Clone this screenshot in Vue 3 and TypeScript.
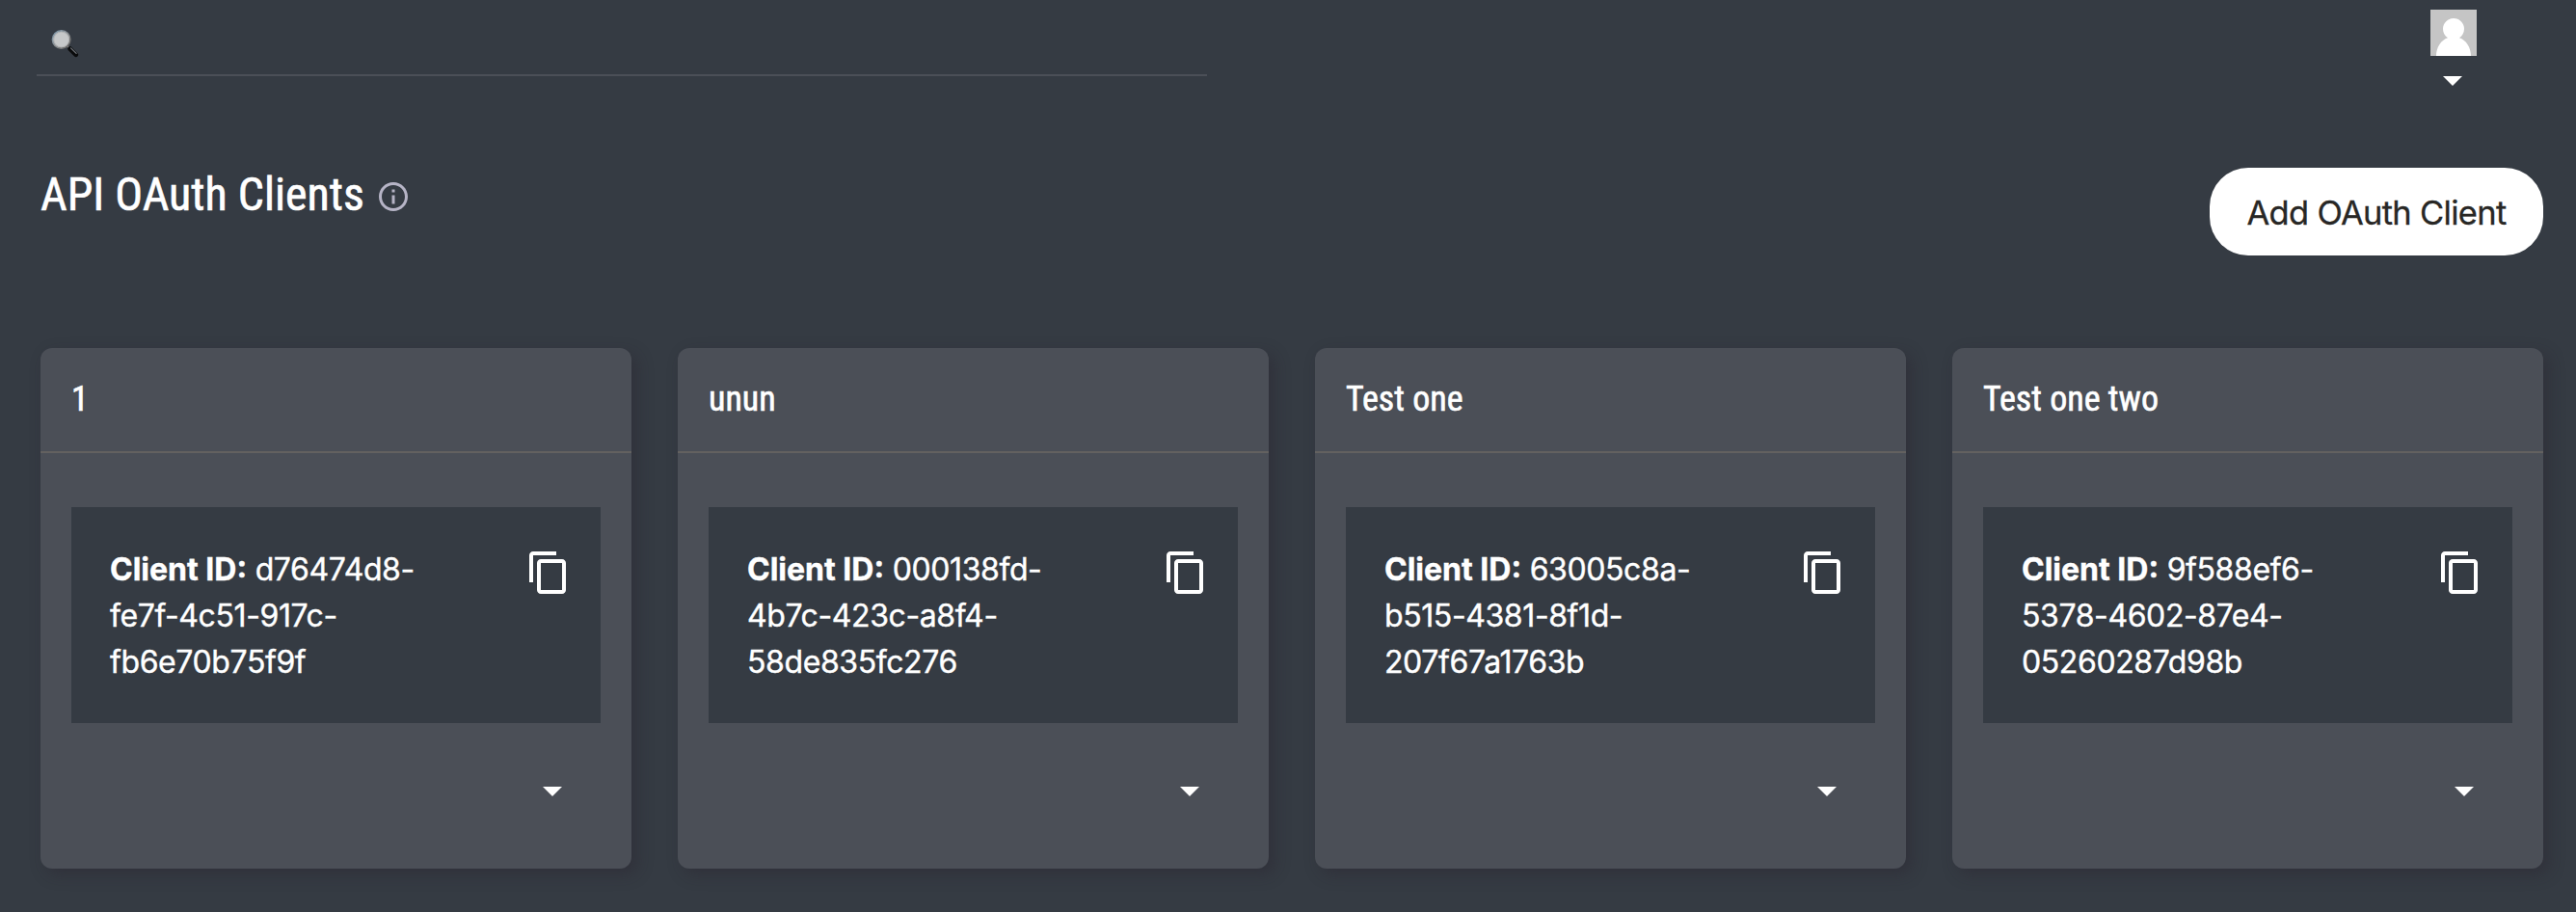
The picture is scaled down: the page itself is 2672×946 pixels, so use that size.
<script setup lang="ts">
interface Client {
  name: string
  idLines: string[]
}

const clients: Client[] = [
  { name: '1', idLines: ['d76474d8-', 'fe7f-4c51-917c-', 'fb6e70b75f9f'] },
  { name: 'unun', idLines: ['000138fd-', '4b7c-423c-a8f4-', '58de835fc276'] },
  { name: 'Test one', idLines: ['63005c8a-', 'b515-4381-8f1d-', '207f67a1763b'] },
  { name: 'Test one two', idLines: ['9f588ef6-', '5378-4602-87e4-', '05260287d98b'] },
]
</script>

<template>
  <div class="page">
    <header class="topbar">
      <div class="search">
        <svg class="search-icon" viewBox="0 0 30 30" aria-hidden="true">
          <defs>
            <linearGradient id="rim" x1="0" y1="0" x2="1" y2="1">
              <stop offset="0" stop-color="#7f9aae" />
              <stop offset="0.5" stop-color="#8b8f92" />
              <stop offset="1" stop-color="#5d5a57" />
            </linearGradient>
          </defs>
          <path d="M17 18l3 3" stroke="#8a8a8a" stroke-width="2.4" />
          <path d="M19.500 20.5l6.300 6.300" stroke="#0a0b0c" stroke-width="4.600" stroke-linecap="round" />
          <path d="M20.500 19.800l5.600 5.600" stroke="#73777d" stroke-width="1.200" stroke-linecap="round" />
          <circle cx="10.700" cy="11" r="9.2" fill="#c6c8c9" stroke="url(#rim)" stroke-width="1.7" />
          <circle cx="10.700" cy="11" r="7.9" fill="none" stroke="#a9abac" stroke-width="0.7" />
        </svg>
      </div>
      <div class="account">
        <svg class="avatar" viewBox="0 0 48 48" aria-hidden="true">
          <rect width="48" height="48" fill="#c5c5c5" />
          <path d="M6 48C6 39 11 31.5 18 29.2C14.800 27.200 13 23.600 13 20A11 11 0 0 1 35 20C35 23.600 33.200 27.200 30 29.200C37 31.500 42 39 42 48Z" fill="#fff" />
        </svg>
        <svg class="caret" viewBox="0 0 24 24" aria-hidden="true"><path d="M7 10l5 5 5-5z" /></svg>
      </div>
    </header>

    <div class="heading">
      <h1>API OAuth Clients</h1>
      <svg class="info" viewBox="0 0 24 24" aria-hidden="true">
        <path d="M11 7h2v2h-2zm0 4h2v6h-2zm1-9C6.480 2 2 6.480 2 12s4.480 10 10 10 10-4.480 10-10S17.520 2 12 2zm0 18c-4.410 0-8-3.590-8-8s3.590-8 8-8 8 3.590 8 8-3.590 8-8 8z" />
      </svg>
      <button class="add" type="button">Add OAuth Client</button>
    </div>

    <main class="cards">
      <section v-for="client in clients" :key="client.name" class="card">
        <h2>{{ client.name }}</h2>
        <div class="body">
          <div class="client-id">
            <p>
              <strong>Client ID:</strong> {{ client.idLines[0] }}<br />{{ client.idLines[1] }}<br />{{ client.idLines[2] }}
            </p>
            <svg class="copy" viewBox="0 0 24 24" aria-hidden="true">
              <path d="M16 1H4c-1.100 0-2 .9-2 2v14h2V3h12V1zm3 4H8c-1.100 0-2 .9-2 2v14c0 1.100.9 2 2 2h11c1.100 0 2-.9 2-2V7c0-1.100-.9-2-2-2zm0 16H8V7h11v14z" />
            </svg>
          </div>
          <svg class="caret" viewBox="0 0 24 24" aria-hidden="true"><path d="M7 10l5 5 5-5z" /></svg>
        </div>
      </section>
    </main>
  </div>
</template>

<style>
body {
  margin: 0;
  background: #353b43;
}
</style>

<style scoped>
.page {
  box-sizing: border-box;
  height: 946px;
  padding: 0 34px 0 42px;
  overflow: hidden;
  background: #353b43;
  color: #fff;
  font-family: Inter, "Liberation Sans", sans-serif;
}

svg {
  display: block;
  flex: none;
  fill: #fff;
}

.topbar {
  display: flex;
  justify-content: space-between;
  height: 174px;
  margin-left: -4px;
}

.search {
  box-sizing: border-box;
  width: 1214px;
  height: 79px;
  padding: 30px 0 0 15px;
  border-bottom: 2px solid #4b4f57;
}

.search-icon {
  width: 30px;
  height: 30px;
}

.account {
  display: flex;
  flex-direction: column;
  gap: 1px;
  width: 48px;
  padding-top: 10px;
  margin-right: 69px;
}

.account .caret {
  margin-left: -1px;
}

.avatar,
.caret,
.copy {
  width: 48px;
  height: 48px;
}

.heading {
  display: flex;
  align-items: flex-start;
  height: 187px;
}

p {
  margin: 0;
}

h1,
h2 {
  margin: 0;
  font-family: Roboto, sans-serif;
  font-weight: 400;
  font-stretch: 75%;
  white-space: nowrap;
  -webkit-text-stroke: 0.6px currentColor;
}

h1 {
  width: 348px;
  font-size: 48px;
  line-height: 56px;
}

.info {
  width: 36px;
  height: 36px;
  margin-top: 12px;
  fill: #b6b4c6;
}

.add {
  width: 346px;
  height: 91px;
  padding: 0;
  margin-left: auto;
  border: 0;
  border-radius: 40px;
  background: #fff;
  color: #282725;
  font: 400 34.5px/93px Inter, sans-serif;
  letter-spacing: -0.7px;
  -webkit-text-stroke: 0.3px currentColor;
}

.cards {
  display: grid;
  grid-template-columns: repeat(4, 1fr);
  gap: 48px;
}

.card {
  height: 540px;
  border-radius: 12px;
  background: #4b4f57;
  box-shadow: 6px 6px 16px rgba(40, 32, 42, 0.35);
}

h2 {
  box-sizing: border-box;
  height: 109px;
  padding: 32px 32px 0;
  border-bottom: 2px solid #636160;
  font-size: 36px;
  line-height: 42px;
}

.body {
  padding: 56px 32px 0;
}

.body > .caret {
  margin: 46px 26px 0 auto;
}

.client-id {
  display: flex;
  justify-content: space-between;
  padding: 41px 30px 39px 40px;
  background: #353b43;
  font-size: 32px;
  line-height: 48px;
}

.client-id p {
  white-space: nowrap;
  letter-spacing: -0.4px;
  -webkit-text-stroke: 0.4px currentColor;
}

strong {
  font-weight: 700;
  letter-spacing: 0;
}

.copy {
  margin-top: 3px;
}
</style>
